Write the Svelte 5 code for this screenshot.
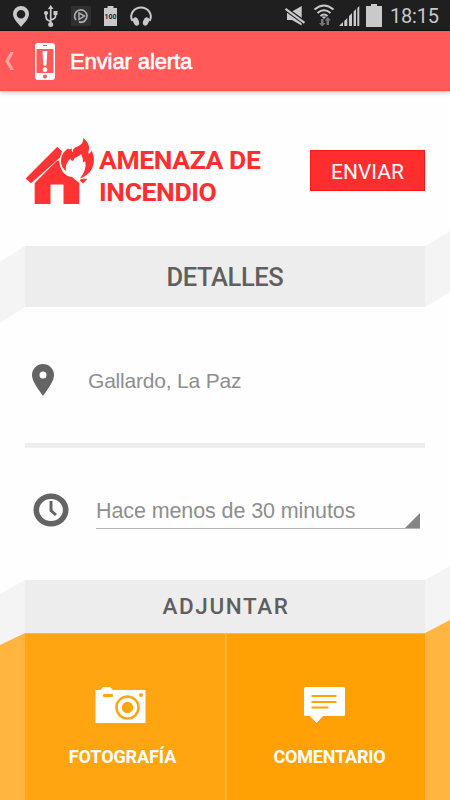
<script>
  let time = "18:15"
  let place = "Gallardo, La Paz"
  let moment = "Hace menos de 30 minutos"
</script>

<style>
  :global(body) {
    background: #fff;
  }

  svg {
    display: block;
    flex: none;
  }

  .screen {
    width: 450px;
    height: 800px;
    display: flex;
    flex-direction: column;
    overflow: hidden;
    background: #fefefe;
    font-family: "Liberation Sans", Arial, sans-serif;
  }

  .status {
    height: 31px;
    flex: none;
    display: flex;
    justify-content: space-between;
    background: #1f1f1f;
    border-bottom: 1px solid #151515;
    box-sizing: border-box;
  }

  .status-right {
    display: flex;
  }

  .time {
    width: 60px;
    font-family: Roboto, sans-serif;
    font-size: 20px;
    letter-spacing: -0.2px;
    line-height: 32px;
    color: #c8c8c8;
  }

  .badge-text {
    font: bold 7px Roboto, sans-serif;
  }

  header {
    height: 60px;
    flex: none;
    display: flex;
    align-items: center;
    box-sizing: border-box;
    background: #ff5959;
    border-bottom: 1px solid #f74c4a;
    box-shadow: 0 1px 5px rgba(0, 0, 0, 0.3);
  }

  h1 {
    margin: 2px 0 0 13px;
    font-size: 22px;
    font-weight: normal;
    line-height: 60px;
    letter-spacing: -0.1px;
    color: #fff;
    -webkit-text-stroke: 0.6px #fff;
  }

  .alert {
    height: 155px;
    flex: none;
    display: flex;
    box-sizing: border-box;
    padding: 47px 25px 0;
  }

  h2 {
    width: 211px;
    margin: 6px 0 0 4px;
    font-family: Roboto, sans-serif;
    font-size: 26.5px;
    font-weight: 700;
    line-height: 31.5px;
    letter-spacing: -0.4px;
    color: #ff2f2f;
  }

  .send {
    width: 115px;
    height: 41px;
    margin-top: 12px;
    padding: 2px 0 0;
    border: 1px solid #fd1414;
    border-radius: 0;
    background: #ff2e2e;
    color: #fff;
    font-family: Roboto, sans-serif;
    font-size: 21px;
  }

  .ribbon {
    display: flex;
    flex: none;
    height: 61px;
  }

  .ribbon svg {
    overflow: visible;
  }

  .ribbon h3 {
    flex: 1;
    margin: 0;
    background: #ededed;
    color: #5f5f5f;
    text-align: center;
    font-family: Roboto, sans-serif;
    font-size: 25.5px;
    font-weight: 500;
    line-height: 62px;
    letter-spacing: -0.4px;
  }

  .ribbon.attach {
    height: 53px;
  }

  .attach h3 {
    font-size: 22.5px;
    line-height: 53px;
    letter-spacing: 1.6px;
    text-indent: 2px;
  }

  .place {
    display: flex;
    align-items: center;
    flex: none;
    height: 141px;
    box-sizing: border-box;
    margin: 0 25px;
    padding: 10px 0 0 7px;
    border-bottom: 5px solid #ededed;
    font-size: 21px;
    letter-spacing: -0.2px;
    color: #8e8e8e;
  }

  .place span {
    margin: 2px 0 0 34px;
  }

  .moment {
    display: flex;
    flex: none;
    height: 132px;
    box-sizing: border-box;
    padding: 45px 30px 0 33px;
  }

  .select {
    display: flex;
    justify-content: space-between;
    align-items: flex-end;
    width: 324px;
    height: 36px;
    box-sizing: border-box;
    margin-left: 27px;
    border-bottom: 1px solid #b4b4b4;
    font-size: 21.5px;
    line-height: 34px;
    letter-spacing: -0.1px;
    white-space: nowrap;
    color: #8e8e8e;
  }

  .actions {
    display: flex;
    flex: 1;
  }

  .actions > svg {
    overflow: visible;
  }

  .action {
    width: 200px;
    box-sizing: border-box;
    display: flex;
    flex-direction: column;
    align-items: center;
    padding: 53px 9px 0 0;
    border: 0;
    border-top: 1px solid #e9b866;
    background: #ffa512;
    color: #fff;
    font-family: Roboto, sans-serif;
    font-size: 18px;
    font-weight: 700;
    letter-spacing: -0.1px;
  }

  .action.comment {
    padding-right: 4px;
    background: #ffa004;
    border-left: 2px solid #ffb43c;
    letter-spacing: -0.2px;
  }

  .action span {
    margin: 22px 0 0 4px;
    line-height: 24px;
  }

  .comment span {
    margin-left: 11px;
  }
</style>

<div class="screen">
  <div class="status">
    <svg width="160" height="30" viewBox="0 0 160 30" fill="#c9c9c9">
      <path fill-rule="evenodd" d="M21 6a8 8 0 0 1 8 8c0 5-5 9-8 13c-3-4-8-8-8-13a8 8 0 0 1 8-8zM21 10a4.300 4.300 0 1 0 0 8.600a4.300 4.300 0 0 0 0-8.600z" />
      <path d="M50.700 8v17M46 13v4q0 3 4.700 4.500M55.500 12v4q0 3-4.800 3.800" stroke="#c9c9c9" stroke-width="1.700" fill="none" />
      <path d="M50.700 5l2.800 4h-5.600zM53.500 11h4v4h-4z" />
      <circle cx="46" cy="13" r="2.100" />
      <circle cx="50.700" cy="24.500" r="2.500" />
      <rect x="71" y="6" width="20" height="20" rx="1" fill="#303030" />
      <g fill="none" stroke="#aaa" stroke-width="1.700">
        <path d="M76 20a6.200 6.200 0 1 1 3 2M79 21.500a6.300 6.300 0 0 0 6-.5" />
        <path d="M79 13l5.500 3l-5.500 3.500z" stroke-width="1.500" />
      </g>
      <path d="M107.500 6h6v2h3.500v18h-13V8h3.500z" />
      <text class="badge-text" x="110.600" y="19" text-anchor="middle" fill="#1f1f1f">100</text>
      <path d="M132.500 21c-4-7 2-13.500 8.500-13.500s12.500 6.500 8.500 13.500" fill="none" stroke="#c9c9c9" stroke-width="2" />
      <ellipse cx="136" cy="21.500" rx="2.800" ry="4.300" transform="rotate(-22 136 21.500)" />
      <ellipse cx="146" cy="21.500" rx="2.800" ry="4.300" transform="rotate(22 146 21.500)" />
    </svg>
    <div class="status-right">
      <svg width="106" height="30" viewBox="285 0 106 30" fill="#c9c9c9">
        <path d="M288 11.500h5l9.700-5.500v19.500l-9.700-5.500h-5z" />
        <path d="M286 8.500l20 14.500" stroke="#1f1f1f" stroke-width="4.600" />
        <path d="M286.500 8.800l19 14" stroke="#c9c9c9" stroke-width="2.200" />
        <g fill="none" stroke="#c9c9c9" stroke-width="2">
          <path d="M315.500 9.500q9.500-8 19 0M318.500 13q6.500-5.500 13 0M321.500 16q3.500-3 7 0" />
        </g>
        <path d="M322.500 16.500h5l-2.500 2.500z" />
        <path d="M322 19h2.500v4h2l-3.200 3.500l-3.300-3.500h2zM327.500 25v-4.500h-1.800l3.100-3.500l3.100 3.500h-1.900V25z" fill="#777" />
        <path d="M340 26l4-4V26zM345.300 26v-5l3-3V26zM350 26V16l3-3V26zM354.600 26V11.400l2.400-2.400V26zM358.300 26V8L360.300 6V26z" />
        <path d="M372 4h6v2h5v21h-16V6h5z" />
      </svg>
      <div class="time">{time}</div>
    </div>
  </div>

  <header>
    <svg width="57" height="60" viewBox="0 0 57 60" fill="#fff">
      <path d="M10.500 21h3.500L9 30l5 9h-3.500L5.300 30z" fill="#ffa4a4" />
      <path fill-rule="evenodd" d="M38 12h14a3 3 0 0 1 3 3v31a3 3 0 0 1-3 3h-14a3 3 0 0 1-3-3V15a3 3 0 0 1 3-3zM36.500 18v24h17V18zM43 14h4v1h-4zM45 43.500a2 2 0 1 0 0 4a2 2 0 0 0 0-4z" />
      <path d="M42.400 20h5l-1 14.500h-3z" />
      <circle cx="45" cy="38.700" r="2.400" />
    </svg>
    <h1>Enviar alerta</h1>
  </header>

  <section class="alert">
    <svg width="70" height="66" viewBox="25 138 70 66" fill="#ff3333">
      <path d="M25.700 178.500L57.300 146.700L62 151.300L59.800 157.700L31 183.300z" />
      <path d="M34.700 183L56.700 161L59.200 160.500Q60.500 175.500 72 177L79.300 183V204H63.500V184.500H50.500V204H34.700z" />
      <path d="M66.500 171.300C60.500 168 59.500 160 63 153.500C64.500 151.500 66 149.500 68.300 148.500C68.300 150 70.500 149 72 148.200C71.500 150 71.500 151.500 73 152C72.500 149 74.500 147.500 77.500 146.500C81 145 83.500 143 83.200 138C86.500 140.500 89.500 144.500 89 148.500C89 151 88 153 88.500 153.700C90 153.500 91 152 91.500 150.500C96 158 95.500 173 80 178.500C83.500 174 87 167 85 161C84.500 162 83.500 162.500 82.800 162C83.300 160 82.500 157 81 154C79.500 157 74 156.500 73.500 160.500C71.500 161 70.300 160 70.500 158.500C67 161.500 64.500 167 66.500 171.300z" />
      <path d="M79.500 180Q82 178.500 84 178.700H87.500L83 183.500z" />
    </svg>
    <h2>AMENAZA DE INCENDIO</h2>
    <button class="send">ENVIAR</button>
  </section>

  <div class="ribbon">
    <svg width="25" height="61" fill="#f4f4f4"><path d="M0 16L25 0V61L0 77z" /></svg>
    <h3>DETALLES</h3>
    <svg width="25" height="61" fill="#f4f4f4"><path d="M0 0L25-15V46L0 61z" /></svg>
  </div>

  <div class="place">
    <svg width="22" height="32" viewBox="0 0 22 32">
      <path fill="#646464" fill-rule="evenodd" d="M11 0a11 11 0 0 1 11 11c0 6-5.500 13-11 21C5.500 24 0 17 0 11A11 11 0 0 1 11 0zM11 7.500a3.500 3.500 0 1 0 0 7a3.500 3.500 0 0 0 0-7z" />
    </svg>
    <span>{place}</span>
  </div>

  <div class="moment">
    <svg width="36" height="34" viewBox="0 0 36 34" fill="none" stroke="#646464">
      <ellipse cx="18" cy="17" rx="14.700" ry="13.800" stroke-width="5.600" />
      <path d="M18 8v9.500l5 4.500" stroke-width="2.900" />
    </svg>
    <div class="select">
      <span>{moment}</span>
      <svg width="15" height="15" fill="#858585"><path d="M15 0V15H0z" /></svg>
    </div>
  </div>

  <div class="ribbon attach">
    <svg width="25" height="53" fill="#f4f4f4"><path d="M0 14L25 0V53L0 65z" /></svg>
    <h3>ADJUNTAR</h3>
    <svg width="25" height="53" fill="#f4f4f4"><path d="M0 0L25-14V40L0 53z" /></svg>
  </div>

  <div class="actions">
    <svg width="25" height="167" fill="#ffb53f"><path d="M0 12L25 0V167H0z" /></svg>
    <button class="action">
      <svg width="51" height="36" viewBox="0 0 51 36">
        <path d="M.500 3H5.500L8 0H15L18 3H50.500V36H.500z" fill="#fff" />
        <g fill="#ffa512">
          <rect x="8" y="7" width="10" height="3" rx="1" />
          <circle cx="46" cy="8" r="2" />
          <circle cx="32.500" cy="20.500" r="5.700" />
        </g>
        <circle cx="32.500" cy="20.500" r="11" fill="none" stroke="#ffa512" stroke-width="2.500" />
      </svg>
      <span>FOTOGRAFÍA</span>
    </button>
    <button class="action comment">
      <svg width="41" height="36" viewBox="0 0 41 36">
        <path d="M1.500 0h38a1.500 1.500 0 0 1 1.500 1.500v26a1.500 1.500 0 0 1-1.500 1.500H19L12.500 36L6 29H1.500A1.500 1.500 0 0 1 0 27.500V1.500A1.500 1.500 0 0 1 1.500 0z" fill="#fff" />
        <path d="M7.500 9h25M7.500 15h25M7.500 20.500h17" stroke="#ffa004" stroke-width="2" />
      </svg>
      <span>COMENTARIO</span>
    </button>
    <svg width="25" height="167" fill="#ffb53f"><path d="M0 0L25-13V167H0z" /></svg>
  </div>
</div>
